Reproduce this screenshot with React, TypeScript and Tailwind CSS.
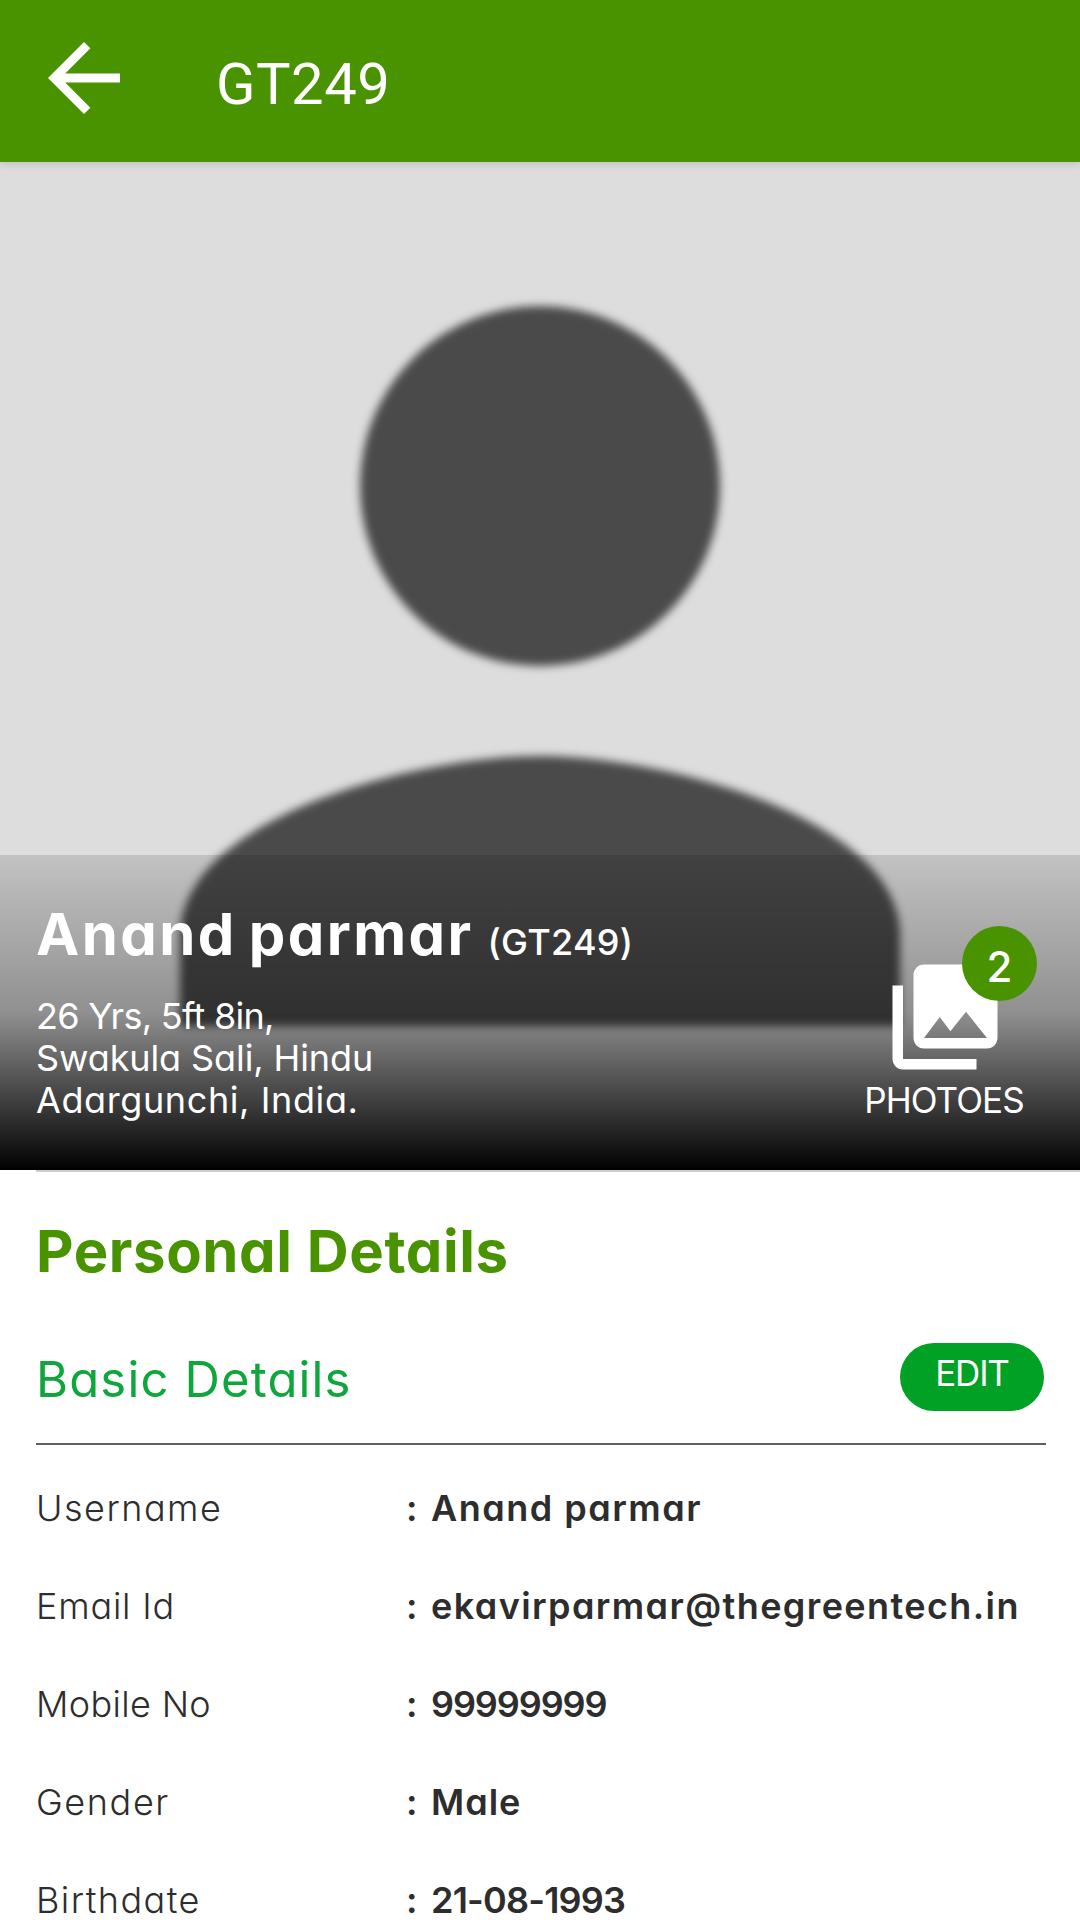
const details = [
  { label: 'Username', value: 'Anand parmar', labelClass: 'tracking-[1.5px]', valueClass: 'tracking-[1.5px]' },
  { label: 'Email Id', value: 'ekavirparmar@thegreentech.in', labelClass: 'tracking-[0.8px]', valueClass: 'tracking-[1.4px]' },
  { label: 'Mobile No', value: '99999999', labelClass: 'tracking-[0.35px]', valueClass: 'tracking-[-1.1px]' },
  { label: 'Gender', value: 'Male', labelClass: 'tracking-[1.6px]', valueClass: 'tracking-[1px]' },
  { label: 'Birthdate', value: '21-08-1993', labelClass: 'tracking-[1.45px]', valueClass: 'tracking-[-0.8px]' },
];

function Header() {
  return (
    <header className="relative z-10 flex h-[162px] shrink-0 items-start bg-[#4a9300] pl-[30px] text-white shadow-[0_2px_8px_rgba(0,0,0,0.14)]">
      <svg className="mt-6 size-[108px]" viewBox="0 0 24 24" fill="currentColor">
        <path d="M20 11H7.83l5.59-5.59L12 4l-8 8 8 8 1.41-1.41L7.83 13H20v-2z" />
      </svg>
      <h1 className="mt-[54px] ml-[78px] font-[Roboto,sans-serif] text-[58px] leading-[60px] tracking-[0.5px]">GT249</h1>
    </header>
  );
}

function Avatar() {
  return (
    <svg className="absolute -top-9 left-0 size-[1080px]" viewBox="0 0 24 24">
      <g fill="#4a4a4a" className="blur-[0.09px]">
        <circle cx="12" cy="8" r="4" />
        <path d="M12 14c-2.67 0-8 1.34-8 4v2h16v-2c0-2.66-5.33-4-8-4z" />
      </g>
    </svg>
  );
}

function Photos() {
  return (
    <div className="mt-[99px] flex w-40 flex-col items-center">
      <div className="relative size-[126px]">
        <svg className="size-full" viewBox="0 0 24 24" fill="currentColor">
          <path d="M22 16V4c0-1.1-.9-2-2-2H8c-1.1 0-2 .9-2 2v12c0 1.1.9 2 2 2h12c1.1 0 2-.9 2-2zm-11-4l2.03 2.71L16 11l4 5H8l3-4zM2 6v14c0 1.1.9 2 2 2h14v-2H4V6H2z" />
        </svg>
        <span className="absolute -top-7 left-[80px] flex size-[75px] items-center justify-center rounded-full bg-[#4a9300] pt-[7px] text-[42px] leading-none font-medium">
          2
        </span>
      </div>
      <span className="-ml-0.5 text-[35px] leading-[40px] tracking-[-0.9px]">PHOTOES</span>
    </div>
  );
}

function Hero() {
  return (
    <section className="relative flex h-[1008px] shrink-0 flex-col justify-end overflow-hidden bg-[#ddd]">
      <Avatar />

      {/* Name and location over the photo */}
      <div className="relative flex h-[315px] justify-between bg-[linear-gradient(to_bottom,rgba(0,0,0,0.12),rgba(0,0,0,0.35)_50%,#000)] pr-[55px] pl-9 text-white">
        <div className="pt-[49px]">
          <h2 className="flex h-[60px] items-baseline gap-3.5 leading-[60px]">
            <span className="text-[58px] font-bold tracking-[2.4px] [word-spacing:-4px]">Anand parmar</span>
            <span className="text-[36px] font-medium tracking-[0.3px]">(GT249)</span>
          </h2>
          <div className="mt-[31px] text-[36px] leading-[42px]">
            <p className="tracking-[-0.7px]">26 Yrs, 5ft 8in,</p>
            <p className="tracking-[-0.1px]">Swakula Sali, Hindu</p>
            <p className="tracking-[0.6px]">Adargunchi, India.</p>
          </div>
        </div>
        <Photos />
      </div>
    </section>
  );
}

function PersonalDetails() {
  return (
    <section className="pr-[34px] pl-9">
      <div className="-mr-[34px] h-0.5 bg-[#ccc]" />
      <h2 className="mt-[49px] text-[58px] leading-[60px] font-bold tracking-[0.6px] text-[#4a9300]">Personal Details</h2>

      <div className="mt-[62px] flex h-[68px] items-center justify-between pr-0.5">
        <h3 className="pt-1 text-[49px] leading-none tracking-[1.15px] text-[#0fa63c]">Basic Details</h3>
        <button className="flex h-[68px] w-36 items-center justify-center rounded-full bg-[#00a125] pb-[7px] text-[35px] leading-none tracking-[-1.2px] text-white">
          EDIT
        </button>
      </div>
      <div className="mt-8 h-0.5 bg-[#5f6062]" />

      {/* Rows */}
      <dl className="pt-3.5 text-[36px] leading-none text-[#2d2d2d]">
        {details.map((row) => (
          <div key={row.label} className="flex h-[98px] items-center">
            <dt className={`w-[370px] font-[350] ${row.labelClass}`}>{row.label}</dt>
            <dd className="flex font-semibold whitespace-nowrap">
              <span className="w-[25px]">:</span>
              <span className={row.valueClass}>{row.value}</span>
            </dd>
          </div>
        ))}
      </dl>
    </section>
  );
}

export default function App() {
  return (
    <div className="flex h-screen w-full flex-col overflow-hidden bg-white font-[Inter,sans-serif] [font-feature-settings:'cv11']">
      <Header />
      <Hero />
      <PersonalDetails />
    </div>
  );
}
